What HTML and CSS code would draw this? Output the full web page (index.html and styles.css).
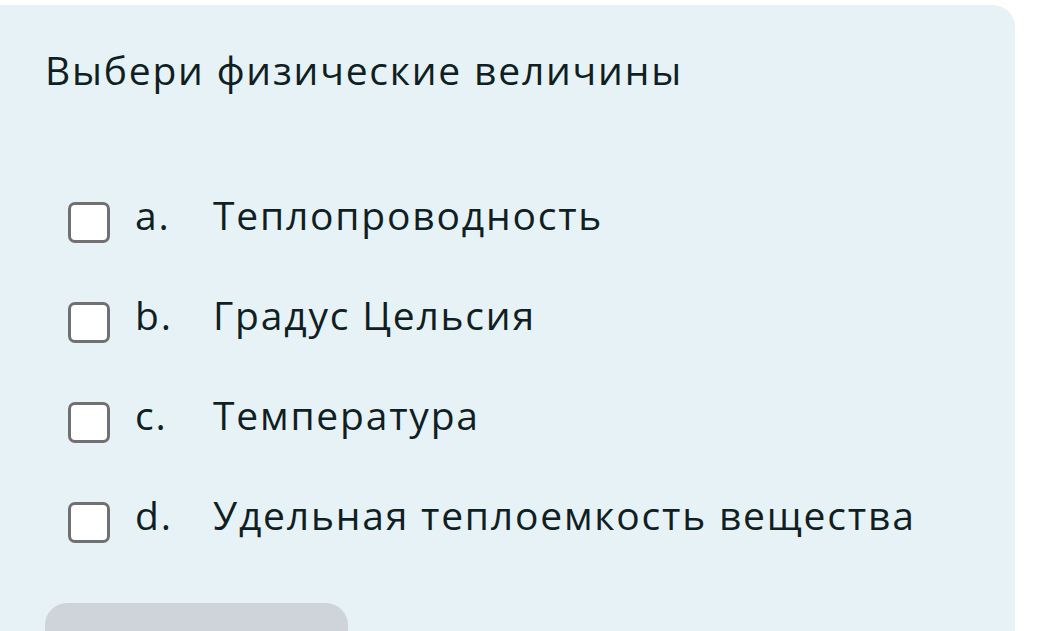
FILE: index.html
```html
<!DOCTYPE html>
<html lang="ru">
<head>
  <meta charset="UTF-8">
  <title>Выбери физические величины</title>
  <link rel="stylesheet" href="styles.css">
</head>
<body>
  <div class="card">
    <div class="question">Выбери физические величины</div>
    <div class="answers">
      <label class="answer">
        <span class="check"></span>
        <span class="letter">a.</span>
        <span class="text">Теплопроводность</span>
      </label>
      <label class="answer">
        <span class="check"></span>
        <span class="letter">b.</span>
        <span class="text">Градус Цельсия</span>
      </label>
      <label class="answer">
        <span class="check"></span>
        <span class="letter">c.</span>
        <span class="text">Температура</span>
      </label>
      <label class="answer">
        <span class="check"></span>
        <span class="letter">d.</span>
        <span class="text">Удельная теплоемкость вещества</span>
      </label>
    </div>
    <div class="submit"></div>
  </div>
</body>
</html>
```

FILE: styles.css
```css
html, body {
  margin: 0;
  padding: 0;
  width: 1039px;
  height: 631px;
  background-color: white;
  font-family: "Open Sans", "Noto Sans", sans-serif;
  color: #0f1f24;
  overflow: hidden;
}
.card {
  width: 1015px;
  height: 700px;
  margin-top: 5px;
  padding: 41px 0 0 45px;
  box-sizing: border-box;
  background-color: #e7f2f6;
  border-radius: 0 22px 0 0;
}
.question {
  font-size: 39px;
  line-height: 48px;
  letter-spacing: 1.8px;
}
.answers {
  display: flex;
  flex-direction: column;
  gap: 56px;
  margin-top: 99px;
  padding-left: 23px;
}
.answer {
  display: flex;
  align-items: flex-start;
  height: 44px;
  font-size: 39px;
  line-height: 44px;
  letter-spacing: 1.8px;
}
.check {
  width: 42px;
  height: 41px;
  margin-top: 9px;
  border: 3px solid #707070;
  border-radius: 7px;
  background-color: white;
  box-sizing: border-box;
}
.letter {
  width: 78px;
  margin-left: 25px;
}
.submit {
  width: 303px;
  height: 60px;
  margin-top: 66px;
  background-color: #cfd4db;
  border-radius: 22px;
}
```
